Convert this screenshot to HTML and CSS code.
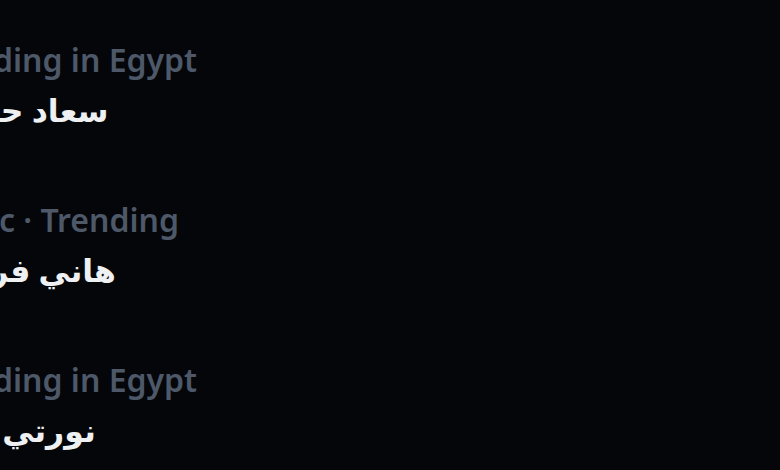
FILE: index.html
```html
<!DOCTYPE html>
<html lang="en">
<head>
    <meta charset="UTF-8">
    <meta name="viewport" content="width=device-width, initial-scale=1.0">
    <title>Trends</title>
    <link rel="stylesheet" href="styles.css">
</head>
<body>
    <div class="trends">
        <div class="trend">
            <div class="trend-meta">Trending in Egypt</div>
            <div class="trend-name">سعاد حسني</div>
        </div>
        <div class="trend">
            <div class="trend-meta">Music · Trending</div>
            <div class="trend-name">هاني فرحات</div>
        </div>
        <div class="trend">
            <div class="trend-meta">Trending in Egypt</div>
            <div class="trend-name">نورتي مصر</div>
        </div>
    </div>
</body>
</html>
```

FILE: styles.css
```css
html, body {
    margin: 0;
    height: 100%;
    overflow: hidden;
}

body {
    background: #04060a;
    font-family: "Noto Sans", "DejaVu Sans", sans-serif;
}

/* zoomed-in crop of the trends list, left edge runs off screen */
.trends {
    margin-left: -76px;
    padding-top: 38px;
}

.trend {
    height: 160px;
}

.trend-meta {
    color: #4d5868;
    font-size: 32px;
    font-weight: 600;
    line-height: 44px;
    white-space: nowrap;
}

.trend-name {
    color: #eef0f2;
    font-size: 31.5px;
    font-weight: 600;
    line-height: 56px;
    white-space: nowrap;
}
```
